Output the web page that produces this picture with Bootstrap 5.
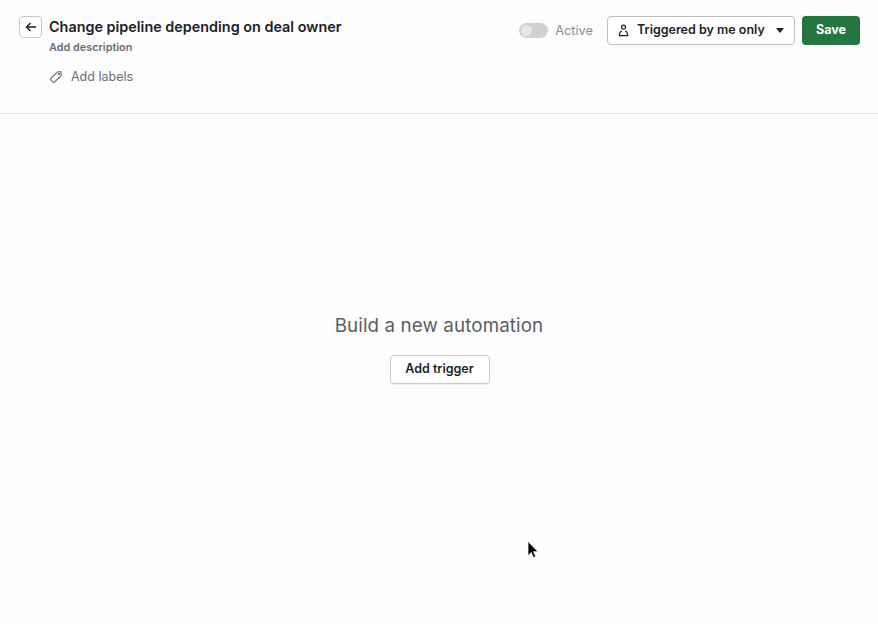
<!DOCTYPE html>
<html lang="en"><head><meta charset="utf-8"><title>Automation</title>
<link rel="stylesheet" href="https://cdn.jsdelivr.net/npm/bootstrap@5.3.0/dist/css/bootstrap.min.css">
<style>
html,body{height:100%}
body{font-family:Inter,"Liberation Sans",sans-serif;background:#fdfdfd;color:#1b1f27;overflow:hidden}
.app-shell{height:624px}
.top-bar{height:114px;border-bottom:1px solid #e3e4e6;padding:16px 18px 0 19px}
.back-btn{width:23px;height:22px;padding:0;background:#fff;border:1px solid #c6c8cc;border-radius:4px;color:#1b1f27;margin-right:7px}
.auto-title{font-size:14.4px;font-weight:600;line-height:22px;margin:0}
.auto-desc{font-size:10.85px;font-weight:600;color:#6a6d73;line-height:14px;margin-top:2px}
.auto-labels{font-size:12.5px;color:#6a6d73;line-height:16px;margin-top:15px;gap:8px}
.toggle-track{width:29px;height:15px;border-radius:8px;background:#cfd0d4;padding:2px;margin-right:7px}
.toggle-knob{width:11px;height:11px;border-radius:50%;background:#e6e7e9}
.active-txt{font-size:12.8px;color:#8b8e94;margin-right:14px}
.owner-btn{width:188px;height:29px;background:#fff;border:1px solid #bfc1c5;border-radius:4px;font-size:12.5px;font-weight:600;color:#1b1f27;padding:0 10px;gap:8px}
.caret-mark{width:0;height:0;border-left:4.5px solid transparent;border-right:4.5px solid transparent;border-top:5px solid #1b1f27;margin-left:auto}
.save-btn{width:58px;height:29px;background:#24763f;border:0;border-radius:4px;color:#fff;font-size:12.5px;font-weight:700;padding:0;margin-left:7px}
.empty-area{padding-top:199px}
.empty-title{font-size:18.8px;font-weight:400;color:#5c5f64;line-height:26px;margin:0 0 16px;letter-spacing:.1px}
.trigger-btn{width:100px;height:29px;background:#fff;border:1px solid #c6c8cc;border-radius:4px;font-size:12.5px;font-weight:600;color:#1b1f27;padding:0 1px 0 0;margin-left:2px;box-shadow:0 1px 1px rgba(0,0,0,.06)}
.cursor-mark{position:absolute;left:527px;top:541px}
</style></head>
<body>
<div class="app-shell position-relative">
  <header class="top-bar d-flex justify-content-between align-items-start">
    <div class="d-flex align-items-start">
      <button class="back-btn d-flex align-items-center justify-content-center" aria-label="Back">
        <svg width="12" height="12" viewBox="0 0 12 12" fill="none" stroke="currentColor" stroke-width="1.4"><path d="M11 6H1.500M5.500 2 1.500 6l4 4"/></svg>
      </button>
      <div>
        <h1 class="auto-title">Change pipeline depending on deal owner</h1>
        <div class="auto-desc">Add description</div>
        <div class="auto-labels d-flex align-items-center">
          <svg width="14" height="14" viewBox="0 0 14 14" fill="none" stroke="currentColor" stroke-width="1.1" stroke-linejoin="round"><path d="M1.800 8.500 8 2.300c.3-.3.7-.5 1.100-.5h3.100v3.100c0 .4-.2.8-.5 1.100L5.500 12.200c-.4.4-1 .4-1.400 0L1.800 9.900c-.4-.4-.4-1 0-1.400z"/><circle cx="10" cy="4" r=".6"/></svg>
          <span>Add labels</span>
        </div>
      </div>
    </div>
    <div class="d-flex align-items-center">
      <div class="toggle-track"><div class="toggle-knob"></div></div>
      <span class="active-txt">Active</span>
      <button class="owner-btn d-flex align-items-center">
        <svg width="11" height="13" viewBox="0 0 11 13" fill="none" stroke="currentColor" stroke-width="1.2"><circle cx="5.500" cy="3.200" r="2"/><path d="M3.800 6.800 C2.500 7.500 1.500 9 1.300 11.700h8.400C9.500 9 8.500 7.500 7.200 6.800"/></svg>
        <span>Triggered by me only</span>
        <span class="caret-mark"></span>
      </button>
      <button class="save-btn">Save</button>
    </div>
  </header>
  <main class="empty-area text-center">
    <h2 class="empty-title">Build a new automation</h2>
    <button class="trigger-btn">Add trigger</button>
  </main>
  <svg class="cursor-mark" width="13" height="18" viewBox="0 0 13 18"><path d="M1 .5v14l3.300-3 2.200 5 2.200-1-2.200-4.800h4.500z" fill="#000" stroke="#fff" stroke-width=".7"/></svg>
</div>
</body></html>
